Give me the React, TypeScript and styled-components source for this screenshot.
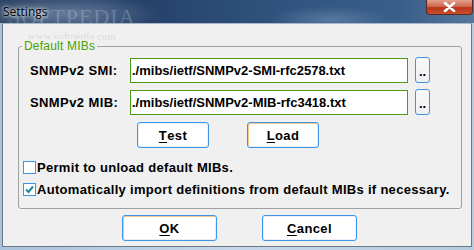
import React from 'react';
import styled, {createGlobalStyle} from 'styled-components';

const GlobalStyle = createGlobalStyle`
  html, body {
    margin: 0;
    padding: 0;
    width: 474px;
    height: 250px;
    overflow: hidden;
  }
  body {
    font-family: "Liberation Sans", Arial, sans-serif;
  }
`;

const Mnemonic = ({children}: {children: string}) => (
  <Styled.Underline>{children}</Styled.Underline>
);

const PathRow = ({label, value}: {label: string; value: string}) => (
  <Styled.Row>
    <Styled.Label>{label}</Styled.Label>
    <Styled.PathInput readOnly value={value} />
    <Styled.Browse>..</Styled.Browse>
  </Styled.Row>
);

const Check = ({checked, children}: {checked?: boolean; children: string}) => (
  <Styled.CheckRow>
    <Styled.Box>
      {checked && (
        <svg width="9" height="9" viewBox="0 0 9 9">
          <path d="M1 4.5 L3.5 7 L8 1.5" fill="none" stroke="#1b8a9a" strokeWidth="2" />
        </svg>
      )}
    </Styled.Box>
    <Styled.CheckText>{children}</Styled.CheckText>
  </Styled.CheckRow>
);

export default function App() {
  return (
    <>
      <GlobalStyle />
      <Styled.Window>
        <Styled.TitleBar>
          <Styled.Title>Settings</Styled.Title>
          <Styled.Watermark>SOFTPEDIA</Styled.Watermark>
          <Styled.Close>
            <svg width="13" height="10" viewBox="0 0 13 10">
              <path d="M2 1 L11 9 M11 1 L2 9" stroke="#fff" strokeWidth="2.6" strokeLinecap="round" />
            </svg>
          </Styled.Close>
        </Styled.TitleBar>
        <Styled.Client>
          <Styled.SiteMark>www.softpedia.com</Styled.SiteMark>
          <Styled.Group>
            <Styled.Legend>Default MIBs</Styled.Legend>
            <Styled.Rows>
              <PathRow label="SNMPv2 SMI:" value="./mibs/ietf/SNMPv2-SMI-rfc2578.txt" />
              <PathRow label="SNMPv2 MIB:" value="./mibs/ietf/SNMPv2-MIB-rfc3418.txt" />
            </Styled.Rows>
            <Styled.ActionRow>
              <Styled.Button>
                <Mnemonic>T</Mnemonic>est
              </Styled.Button>
              <Styled.Button $focused>
                <Mnemonic>L</Mnemonic>oad
              </Styled.Button>
            </Styled.ActionRow>
            <Styled.Checks>
              <Check>Permit to unload default MIBs.</Check>
              <Check checked>Automatically import definitions from default MIBs if necessary.</Check>
            </Styled.Checks>
          </Styled.Group>
          <Styled.Footer>
            <Styled.Button $wide $focused>
              <Mnemonic>O</Mnemonic>K
            </Styled.Button>
            <Styled.Button $wide>
              <Mnemonic>C</Mnemonic>ancel
            </Styled.Button>
          </Styled.Footer>
        </Styled.Client>
      </Styled.Window>
    </>
  );
}

const Styled = {
  Window: styled.div`
    width: 474px;
    height: 250px;
    display: flex;
    flex-direction: column;
    background: linear-gradient(90deg, #a9c3dc 0%, #c6d8ea 50%, #b5cbe0 100%);
    box-sizing: border-box;
    padding: 0 2px 3px 2px;
  `,
  TitleBar: styled.div`
    height: 23px;
    flex: none;
    display: flex;
    align-items: flex-start;
    position: relative;
    margin: 0 -2px;
    background:
      radial-gradient(ellipse 90px 20px at 70px 14px, rgba(160, 180, 205, 0.5), transparent),
      radial-gradient(ellipse 60px 14px at 330px 20px, rgba(130, 160, 195, 0.45), transparent),
      linear-gradient(90deg, #2c4464 0%, #26416a 30%, #30547f 60%, #3a5f8b 85%, #56779a 100%);
  `,
  Title: styled.span`
    font-family: "Open Sans", "Noto Sans", sans-serif;
    font-size: 12px;
    color: #000;
    margin: 3px 0 0 3px;
    text-shadow: 0 0 6px rgba(255, 255, 255, 0.9), 0 0 3px rgba(255, 255, 255, 0.9);
    position: relative;
    z-index: 1;
  `,
  Watermark: styled.span`
    position: absolute;
    left: 8px;
    top: 4px;
    font-family: "Liberation Serif", serif;
    font-size: 22px;
    letter-spacing: 1px;
    color: rgba(200, 210, 225, 0.3);
  `,
  Close: styled.div`
    margin-left: auto;
    margin-right: 1px;
    width: 47px;
    height: 15px;
    display: flex;
    align-items: center;
    justify-content: center;
    box-sizing: border-box;
    border: 1px solid #5a2a22;
    border-top: none;
    border-radius: 0 0 4px 4px;
    background: linear-gradient(180deg, #e3a08e 0%, #cf6a50 45%, #b8341b 55%, #c9502d 100%);
  `,
  Client: styled.div`
    flex: 1;
    position: relative;
    background: #f0f0f0;
    border: 1px solid #6d7885;
    border-top-color: #a8b8c8;
    display: flex;
    flex-direction: column;
    padding: 22px 0 0 15px;
  `,
  SiteMark: styled.span`
    position: absolute;
    left: 25px;
    top: 6px;
    font-size: 11px;
    font-family: "Liberation Serif", serif;
    color: rgba(160, 160, 160, 0.3);
  `,
  Group: styled.div`
    position: relative;
    width: 444px;
    height: 163px;
    box-sizing: border-box;
    border: 1px solid #a0a0a0;
    border-radius: 3px;
    padding: 10px 0 0 11px;
    display: flex;
    flex-direction: column;
  `,
  Legend: styled.span`
    position: absolute;
    top: -8px;
    left: 3px;
    padding: 0 2px;
    background: #f0f0f0;
    color: #4aa000;
    font-size: 12px;
    line-height: 14px;
    letter-spacing: 0.2px;
  `,
  Rows: styled.div`
    display: flex;
    flex-direction: column;
    gap: 6px;
  `,
  Row: styled.div`
    display: flex;
    align-items: center;
    height: 26px;
  `,
  Label: styled.span`
    width: 100px;
    font-size: 13px;
    font-weight: bold;
    letter-spacing: 0.4px;
    color: #000;
  `,
  PathInput: styled.input`
    width: 278px;
    height: 25px;
    box-sizing: border-box;
    border: 1px solid #4c9a17;
    background: #fff;
    padding: 0 0 0 1px;
    font-family: "Liberation Sans", Arial, sans-serif;
    font-size: 13px;
    font-weight: bold;
    color: #000;
    outline: none;
  `,
  Browse: styled.div`
    margin-left: 7px;
    width: 15px;
    height: 26px;
    box-sizing: border-box;
    border: 1px solid #3d95e8;
    border-radius: 3px;
    background: linear-gradient(180deg, #fafafa, #eef0f3);
    display: flex;
    align-items: flex-end;
    justify-content: center;
    font-size: 13px;
    font-weight: bold;
    line-height: 17px;
    padding-bottom: 2px;
  `,
  ActionRow: styled.div`
    display: flex;
    gap: 38px;
    margin: 7px 0 0 107px;
  `,
  Button: styled.div<{$wide?: boolean; $focused?: boolean}>`
    width: ${p => (p.$wide ? 95 : 72)}px;
    height: 26px;
    box-sizing: border-box;
    border: 1px solid #3d95e8;
    border-radius: 3px;
    background: #fff;
    box-shadow: ${p =>
      p.$focused ? 'inset 1px 1px 0 #f6c98a, inset -1px -1px 0 #e8eef6' : 'inset 0 0 0 1px #e8f0fa'};
    display: flex;
    align-items: center;
    justify-content: center;
    font-size: 13px;
    font-weight: bold;
    letter-spacing: 0.4px;
    color: #000;
  `,
  Underline: styled.span`
    text-decoration: underline;
    text-underline-offset: 2px;
  `,
  Checks: styled.div`
    display: flex;
    flex-direction: column;
    gap: 9px;
    margin: 13px 0 0 -7px;
  `,
  CheckRow: styled.div`
    display: flex;
    align-items: center;
    height: 13px;
  `,
  Box: styled.div`
    width: 13px;
    height: 13px;
    box-sizing: border-box;
    border: 1px solid #3d95e8;
    background: #fff;
    display: flex;
    align-items: center;
    justify-content: center;
    margin-right: 1px;
  `,
  CheckText: styled.span`
    font-size: 13px;
    font-weight: bold;
    letter-spacing: 0.3px;
    color: #000;
    white-space: nowrap;
  `,
  Footer: styled.div`
    display: flex;
    gap: 45px;
    margin: 6px 0 0 104px;
  `,
};
